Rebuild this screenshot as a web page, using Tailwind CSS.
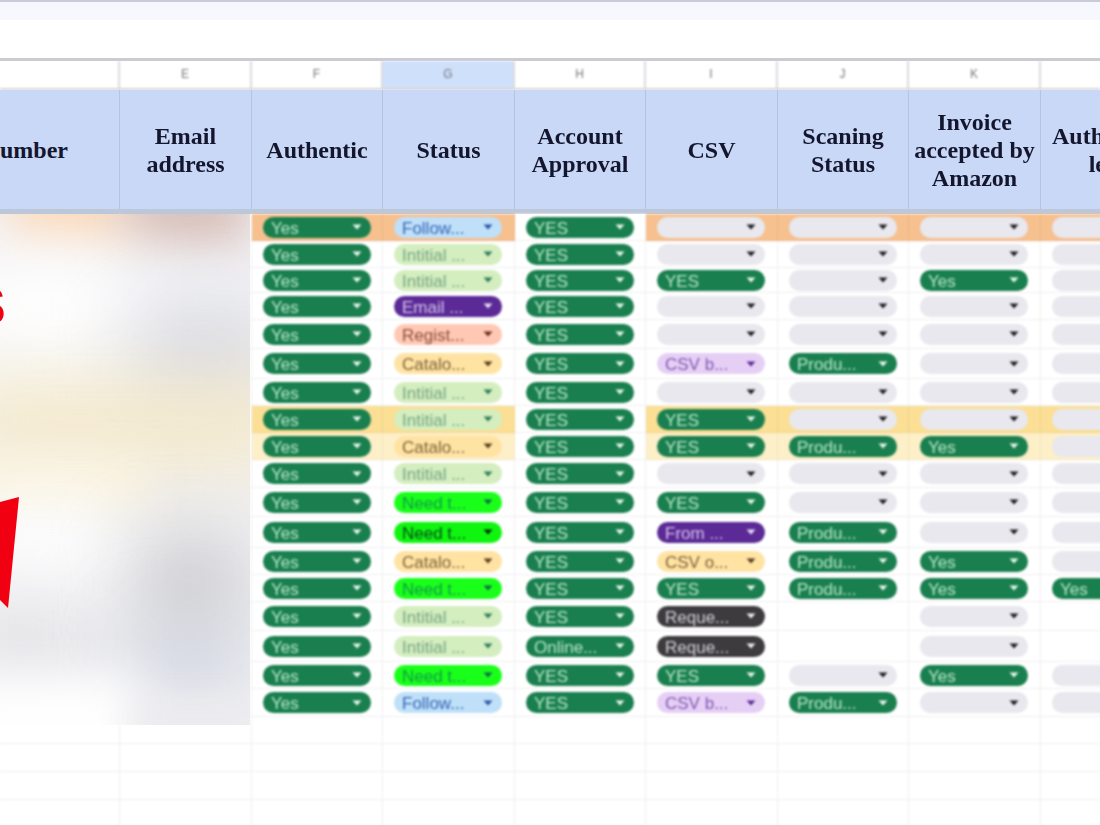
<!DOCTYPE html>
<html lang="en">
<head>
    <meta charset="UTF-8">
    <title>Sheet</title>
    <script src="https://cdn.jsdelivr.net/npm/@tailwindcss/browser@4"></script>
</head>
<body class="bg-white overflow-hidden">
    <div class="relative w-[1100px] h-[825px] overflow-hidden font-['Liberation_Sans',sans-serif]">
        <!-- Toolbar remains -->
        <div class="h-[2px] bg-[#c9cbd8]"></div>
        <div class="h-[18px] bg-[#f6f8fd]"></div>
        <div class="h-[38px] bg-white"></div>
        <div class="h-[3px] bg-[#cbcbd0]"></div>

        <!-- Column letters -->
        <div class="grid grid-cols-[120px_132px_131px_132px_131px_132px_131px_132px_150px] h-[29px] border-b-2 border-[#d4d4d8] text-[12px] text-[#74777e] text-center leading-[27px] blur-[0.8px]">
            <div class="border-r-2 border-[#dcdce0]"></div>
            <div class="border-r-2 border-[#dcdce0]">E</div>
            <div class="border-r-2 border-[#dcdce0]">F</div>
            <div class="border-r-2 border-[#dcdce0] bg-[#cfe0fa]">G</div>
            <div class="border-r-2 border-[#dcdce0]">H</div>
            <div class="border-r-2 border-[#dcdce0]">I</div>
            <div class="border-r-2 border-[#dcdce0]">J</div>
            <div class="border-r-2 border-[#dcdce0]">K</div>
            <div></div>
        </div>

        <!-- Header row -->
        <div class="grid grid-cols-[120px_132px_131px_132px_131px_132px_131px_132px_150px] h-[119px] bg-[#c9d8f7] font-['Liberation_Serif',serif] font-bold text-[24px] leading-[28px] text-[#14162e] text-center blur-[0.7px]">
            <div class="flex items-center justify-start overflow-hidden border-r border-[#b4c3de]"><span class="whitespace-nowrap">umber</span></div>
            <div class="flex items-center justify-center border-r border-[#b4c3de]">Email<br>address</div>
            <div class="flex items-center justify-center border-r border-[#b4c3de]">Authentic</div>
            <div class="flex items-center justify-center border-r border-[#b4c3de]">Status</div>
            <div class="flex items-center justify-center border-r border-[#b4c3de]">Account<br>Approval</div>
            <div class="flex items-center justify-center border-r border-[#b4c3de]">CSV</div>
            <div class="flex items-center justify-center border-r border-[#b4c3de]">Scaning<br>Status</div>
            <div class="flex items-center justify-center border-r border-[#b4c3de]">Invoice<br>accepted by<br>Amazon</div>
            <div class="flex items-center justify-center">Authenticity<br>letter</div>
        </div>
        <div class="h-[5px] bg-[#bcc7da]"></div>

        <!-- Data rows get rendered here -->
        <div id="rows" class="blur-[0.8px]"></div>

        <!-- Blurred out D and E columns -->
        <div class="absolute left-0 top-[214px] w-[250px] h-[511px] overflow-hidden bg-[#f2f2f5]">
            <div class="absolute left-[10px] top-[-30px] w-[120px] h-[55px] bg-[#fbd2ab] blur-xl"></div>
            <div class="absolute left-[125px] top-[-30px] w-[125px] h-[55px] bg-[#d3b6ae] blur-xl"></div>
            <div class="absolute left-[-40px] top-[40px] w-[170px] h-[110px] bg-white blur-2xl"></div>
            <div class="absolute left-[140px] top-[105px] w-[130px] h-[75px] bg-[#d2d4de] blur-2xl"></div>
            <div class="absolute left-[-40px] top-[175px] w-[340px] h-[70px] bg-[#f6e8bf] blur-2xl"></div>
            <div class="absolute left-[-40px] top-[245px] w-[190px] h-[50px] bg-[#faf2da] blur-xl"></div>
            <div class="absolute left-[-40px] top-[290px] w-[170px] h-[100px] bg-white blur-2xl"></div>
            <div class="absolute left-[-40px] top-[390px] w-[130px] h-[65px] bg-[#dedee1] blur-2xl"></div>
            <div class="absolute left-[140px] top-[325px] w-[100px] h-[85px] bg-[#c6c5c8] blur-2xl"></div>
            <div class="absolute left-[140px] top-[415px] w-[100px] h-[60px] bg-[#c6ccdb] blur-2xl"></div>
            <div class="absolute left-[-40px] top-[465px] w-[180px] h-[80px] bg-white blur-xl"></div>
            <div class="absolute left-[130px] top-[485px] w-[130px] h-[40px] bg-[#ecebee] blur-lg"></div>
        </div>

        <!-- Red annotations on top -->
        <span class="absolute left-[-29px] top-[280px] text-[52px] leading-[52px] font-bold text-[#f00010] blur-[0.7px]">S</span>
        <svg class="absolute left-0 top-[496px] blur-[0.7px]" width="20" height="114" viewBox="0 0 20 114">
            <polygon points="0,6 19,1 8,112 0,104" fill="#f00010"/>
        </svg>
    </div>

    <script>
        const styles = {
            yes: ['bg-[#1a7f4f] text-[#b7e6c8]', 'text-[#e6f5ea]'],
            empty: ['bg-[#e8e8ee] text-transparent', 'text-[#1d1d22]'],
            follow: ['bg-[#bfe0f8] text-[#3566b8]', 'text-[#2a55a8]'],
            initial: ['bg-[#d4eebf] text-[#76a585]', 'text-[#2e7d5b]'],
            purple: ['bg-[#5b2a96] text-[#d6c4ee]', 'text-[#e6dcf5]'],
            regist: ['bg-[#ffc8b4] text-[#8c4f38]', 'text-[#6b2f1c]'],
            amber: ['bg-[#ffe3a3] text-[#7d6238]', 'text-[#5c3d1c]'],
            need: ['bg-[#1aff1a] text-[#119a4a]', 'text-[#0e6a4c]'],
            needDark: ['bg-[#10f510] text-[#064a1e]', 'text-[#06280f]'],
            csvb: ['bg-[#e6cff5] text-[#7f58b0]', 'text-[#5b2a96]'],
            dark: ['bg-[#3d3b3e] text-[#cfcfd6]', 'text-[#f0f0f0]'],
        };

        const Y = ['yes', 'Yes'], C = ['yes', 'YES'], P = ['yes', 'Produ...'], E = ['empty', ''], N = null;
        const FL = ['follow', 'Follow...'], IN = ['initial', 'Intitial ...'], CA = ['amber', 'Catalo...'], NT = ['need', 'Need t...'];
        const CB = ['csvb', 'CSV b...'], RQ = ['dark', 'Reque...'];

        // height, row colour, then cols F to L
        const rows = [
            [27, 'orange', [Y, FL, C, E, E, E, E]],
            [27, '', [Y, IN, C, E, E, E, E]],
            [25, '', [Y, IN, C, C, E, Y, E]],
            [27, '', [Y, ['purple', 'Email ...'], C, E, E, E, E]],
            [29, '', [Y, ['regist', 'Regist...'], C, E, E, E, E]],
            [30, '', [Y, CA, C, CB, P, E, E]],
            [27, '', [Y, IN, C, E, E, E, E]],
            [27, 'yellow', [Y, IN, C, C, E, E, E]],
            [27, 'cream', [Y, CA, C, C, P, Y, E]],
            [28, '', [Y, IN, C, E, E, E, E]],
            [29, '', [Y, NT, C, C, E, E, E]],
            [31, '', [Y, ['needDark', 'Need t...'], C, ['purple', 'From ...'], P, E, E]],
            [27, '', [Y, CA, C, ['amber', 'CSV o...'], P, Y, E]],
            [27, '', [Y, NT, C, C, P, Y, Y]],
            [29, '', [Y, IN, C, RQ, N, E, N]],
            [31, '', [Y, IN, ['yes', 'Online...'], RQ, N, E, N]],
            [27, '', [Y, NT, C, C, E, Y, E]],
            [28, '', [Y, FL, C, CB, P, E, E]],
            [27, '', [N, N, N, N, N, N, N]],
            [28, '', [N, N, N, N, N, N, N]],
            [28, '', [N, N, N, N, N, N, N]],
            [30, '', [N, N, N, N, N, N, N]],
        ];

        const rowBg = {
            orange: 'bg-[#f6c08f] border-[#eeb584]',
            yellow: 'bg-[#fbdf95] border-[#f0d48c]',
            cream: 'bg-[#fdefc8] border-[#f3e5bd]',
            '': 'bg-white border-[#f0f0f4]',
        };

        function pill(cell) {
            if (!cell) return '';
            const [bg, arrow] = styles[cell[0]];
            return `<div class="flex items-center justify-between w-[108px] h-[21px] ml-[11px] pl-[8px] pr-[9px] rounded-full text-[17px] leading-[21px] whitespace-nowrap ${bg}">
                <span class="translate-y-[1px]">${cell[1]}</span>
                <svg class="${arrow}" width="10" height="6" viewBox="0 0 10 6"><path d="M0.5 0.5h9L5 5.5z" fill="currentColor"/></svg>
            </div>`;
        }

        document.getElementById('rows').innerHTML = rows.map(([h, colour, cells]) => {
            const tds = cells.map((cell, i) => {
                // Account Approval stays white on highlighted rows
                const bg = i === 2 ? rowBg[''] : rowBg[colour];
                return `<div class="flex items-center border-r border-b ${bg}">${pill(cell)}</div>`;
            }).join('');
            return `<div class="grid grid-cols-[120px_132px_131px_132px_131px_132px_131px_132px_150px]" style="height:${h}px">
                <div class="border-r border-b border-[#f0f0f4]"></div>
                <div class="border-r border-b border-[#f0f0f4]"></div>
                ${tds}
            </div>`;
        }).join('');
    </script>
</body>
</html>
